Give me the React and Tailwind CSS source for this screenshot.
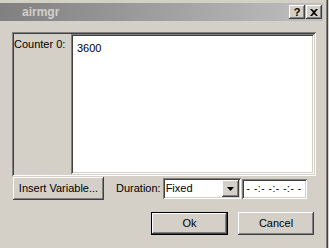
import React from 'react';

const raised =
  'shadow-[inset_-1px_-1px_#404040,inset_1px_1px_#ffffff,inset_-2px_-2px_#808080,inset_2px_2px_#d4d0c8]';
const sunken =
  'shadow-[inset_1px_1px_#808080,inset_-1px_-1px_#ffffff,inset_2px_2px_#404040,inset_-2px_-2px_#d4d0c8]';

function CaptionButton({ children }) {
  return (
    <div className={`w-[16px] h-[14px] bg-[#d4d0c8] flex items-center justify-center text-black font-bold text-[11px] leading-none ${raised}`}>
      {children}
    </div>
  );
}

function Button({ children, className = '', isDefault = false }) {
  return (
    <div
      className={`h-[23px] flex items-center justify-center bg-[#d4d0c8] text-black ${
        isDefault ? 'border border-black' : ''
      } ${className}`}
    >
      <div className={`w-full h-full flex items-center justify-center ${raised}`}>{children}</div>
    </div>
  );
}

export default function App() {
  return (
    <div
      className="w-[329px] h-[248px] flex bg-[#d4d0c8] overflow-hidden text-[11px] text-black"
      style={{ fontFamily: '"Liberation Sans", Arial, sans-serif' }}
    >
      {/* window body */}
      <div className="w-[323px] flex flex-col pt-[3px]">
        {/* title bar */}
        <div className="h-[18px] flex items-center bg-gradient-to-r from-[#808080] to-[#c0c0c0] pl-[22px] pr-[1px]">
          <span className="font-bold text-[#d4d0c8] text-[12px]">airmgr</span>
          <div className="ml-auto flex items-center">
            <CaptionButton>?</CaptionButton>
            <div className="w-[1px]" />
            <CaptionButton>
              <svg width="8" height="7" viewBox="0 0 8 7">
                <path d="M0 0h2l2 2 2-2h2L5 3.5 8 7H6L4 5 2 7H0l3-3.5z" fill="#000" />
              </svg>
            </CaptionButton>
          </div>
        </div>

        <div className="pl-[12px] pt-[11px]">
          {/* counter frame */}
          <div className={`w-[304px] h-[144px] flex ${sunken} p-[2px]`}>
            <div className="w-[57px] pt-[2px]">Counter 0:</div>
            <div className={`flex-1 bg-white ${sunken} pl-[6px] pt-[6px]`}>3600</div>
          </div>

          {/* variable row */}
          <div className="flex items-center mt-[1px] h-[23px]">
            <Button className="w-[91px] ml-[1px]">Insert Variable...</Button>
            <span className="ml-[12px]">Duration:</span>
            <div className={`ml-[2px] w-[78px] h-[21px] bg-white ${sunken} flex items-center p-[2px]`}>
              <span className="flex-1 pl-[1px]">Fixed</span>
              <div className={`w-[17px] h-[17px] bg-[#d4d0c8] flex items-center justify-center ${raised}`}>
                <svg width="7" height="4" viewBox="0 0 7 4">
                  <path d="M0 0h7L3.5 4z" fill="#000" />
                </svg>
              </div>
            </div>
            <div className={`ml-[1px] w-[65px] h-[20px] bg-white ${sunken} flex items-center justify-center text-[10px] text-black tracking-[0.6px]`}>
              - -:- -:- -:- -
            </div>
          </div>

          {/* dialog buttons */}
          <div className="flex mt-[12px] pl-[139px] gap-[10px]">
            <Button isDefault className="w-[77px]">Ok</Button>
            <Button className="w-[76px]">Cancel</Button>
          </div>
        </div>
      </div>

      {/* right window border */}
      <div className="w-[6px] flex">
        <div className="w-[3px] bg-[#d4d0c8]" />
        <div className="w-[1px] bg-[#808080]" />
        <div className="w-[1px] bg-[#404040]" />
        <div className="w-[1px] bg-[#d4d0c8]" />
      </div>
    </div>
  );
}
